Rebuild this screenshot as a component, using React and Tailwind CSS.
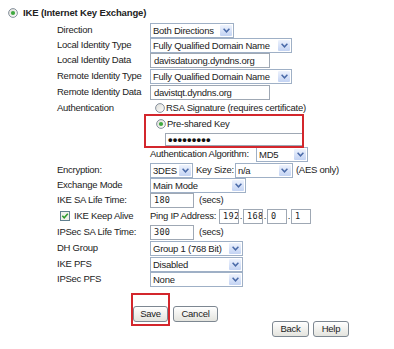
import React from "react";

function Chevron() {
  return (
    <svg width="7" height="5" viewBox="0 0 7 5">
      <path d="M0.6 0.8 L3.5 3.8 L6.4 0.8" stroke="#4a6aa8" strokeWidth="1.5" fill="none" />
    </svg>
  );
}

function Select({ className, children }) {
  return (
    <div className={`flex shrink-0 h-[15px] border border-[#9fb0c6] bg-white ${className}`}>
      <div className="flex-1 min-w-0 pl-[2px] leading-[13px] whitespace-nowrap overflow-hidden">{children}</div>
      <div className="w-[12px] m-[1px] flex items-center justify-center bg-gradient-to-b from-[#eef3fd] to-[#c3d3f3] rounded-[1px]">
        <Chevron />
      </div>
    </div>
  );
}

function Input({ className, children, mono }) {
  return (
    <div
      className={`shrink-0 h-[15px] border border-[#9fa8b4] bg-white pl-[3px] leading-[13px] whitespace-nowrap overflow-hidden ${
        mono ? "font-['DejaVu_Sans_Mono'] text-[8.5px] tracking-[0.3px]" : ""
      } ${className}`}
    >
      {children}
    </div>
  );
}

function Radio({ checked }) {
  return (
    <svg width="10" height="10" viewBox="0 0 10 10" className="shrink-0">
      <defs>
        <linearGradient id="rg" x1="0" y1="0" x2="1" y2="1">
          <stop offset="0" stopColor="#dcdcd6" />
          <stop offset="1" stopColor="#ffffff" />
        </linearGradient>
      </defs>
      <circle cx="5" cy="5" r="4.4" fill="url(#rg)" stroke="#7b8794" strokeWidth="0.9" />
      {checked && <circle cx="5" cy="5" r="2.1" fill="#3fa93f" />}
    </svg>
  );
}

function Checkbox() {
  return (
    <svg width="10" height="10" viewBox="0 0 10 10" className="shrink-0">
      <rect x="0.5" y="0.5" width="9" height="9" fill="#eef0ea" stroke="#5f7f8f" />
      <path d="M2.3 4.8 L4.2 6.8 L7.8 2.8" stroke="#2c9a2c" strokeWidth="1.5" fill="none" />
    </svg>
  );
}

function Row({ label, h, children }) {
  return (
    <div className={`flex items-center ${h || "h-[15px]"}`}>
      <div className="w-[93px] shrink-0 whitespace-nowrap">{label}</div>
      <div className="flex items-center whitespace-nowrap">{children}</div>
    </div>
  );
}

function Btn({ className, children }) {
  return (
    <div
      className={`h-[16px] flex items-center justify-center border border-[#7d8791] rounded-[3px] bg-gradient-to-b from-white to-[#e4e4de] ${className}`}
    >
      {children}
    </div>
  );
}

export default function App() {
  return (
    <div className="relative w-[394px] h-[349px] bg-white text-[#222] font-['Liberation_Sans',Arial,sans-serif] text-[9.5px] tracking-[-0.25px] overflow-hidden">
      <div className="flex items-center h-[14px] mt-[6px] pl-[8px] gap-[5px]">
        <Radio checked />
        <span className="font-bold text-[9.5px] tracking-[-0.15px]">IKE (Internet Key Exchange)</span>
      </div>

      <div className="pl-[57px] mt-[2px] flex flex-col">
        <Row label="Direction" h="h-[16px]">
          <Select className="w-[84px]">Both Directions</Select>
        </Row>
        <Row label="Local Identity Type">
          <Select className="w-[142px]">Fully Qualified Domain Name</Select>
        </Row>
        <Row label="Local Identity Data">
          <Input className="w-[120px]">davisdatuong.dyndns.org</Input>
        </Row>
        <Row label="Remote Identity Type" h="h-[16px]">
          <Select className="w-[142px]">Fully Qualified Domain Name</Select>
        </Row>
        <Row label="Remote Identity Data" h="h-[16px]">
          <Input className="w-[120px]">davistqt.dyndns.org</Input>
        </Row>
        <Row label="Authentication" h="h-[16px]">
          <div className="flex items-center ml-[5px] gap-[1px]">
            <Radio />
            <span>RSA Signature (requires certificate)</span>
          </div>
        </Row>
        <Row label="" h="h-[16px]">
          <div className="flex items-center ml-[6px] gap-[1px]">
            <Radio checked />
            <span>Pre-shared Key</span>
          </div>
        </Row>
        <Row label="" h="h-[14px]">
          <div className="ml-[15px] w-[138px] h-[13px] border border-[#9fa8b4] bg-white pl-[2px] flex items-center text-[13px] font-bold tracking-[0.2px] leading-none text-[#111]">
            •••••••••
          </div>
        </Row>
        <Row label="" h="h-[17px]">
          <span className="w-[104px] shrink-0">Authentication Algorithm:</span>
          <Select className="w-[52px] ml-[2px]">MD5</Select>
        </Row>
        <Row label="Encryption:">
          <Select className="w-[43px]">3DES</Select>
          <span className="ml-[3px]">Key Size:</span>
          <Select className="w-[58px] ml-[1px]">n/a</Select>
          <span className="ml-[3px]">(AES only)</span>
        </Row>
        <Row label="Exchange Mode">
          <Select className="w-[96px]">Main Mode</Select>
        </Row>
        <Row label="IKE SA Life Time:">
          <Input className="w-[44px]" mono>180</Input>
          <span className="ml-[5px]">(secs)</span>
        </Row>
        <Row
          label={
            <div className="flex items-center gap-[4px] pl-[3px]">
              <Checkbox />
              <span>IKE Keep Alive</span>
            </div>
          }
          h="h-[16px]"
        >
          <span>Ping IP Address:</span>
          <Input className="w-[20px] ml-[3px]" mono>192</Input>
          <span className="w-[4px] text-center">.</span>
          <Input className="w-[20px]" mono>168</Input>
          <span className="w-[4px] text-center">.</span>
          <Input className="w-[20px]" mono>0</Input>
          <span className="w-[4px] text-center">.</span>
          <Input className="w-[20px]" mono>1</Input>
        </Row>
        <Row label="IPSec SA Life Time:" h="h-[16px]">
          <Input className="w-[44px]" mono>300</Input>
          <span className="ml-[5px]">(secs)</span>
        </Row>
        <Row label="DH Group" h="h-[16px]">
          <Select className="w-[93px]">Group 1 (768 Bit)</Select>
        </Row>
        <Row label="IKE PFS" h="h-[16px]">
          <Select className="w-[93px]">Disabled</Select>
        </Row>
        <Row label="IPSec PFS">
          <Select className="w-[93px]">None</Select>
        </Row>
      </div>

      <div className="flex pl-[133px] mt-[19px] gap-[5px]">
        <Btn className="w-[35px]">Save</Btn>
        <Btn className="w-[45px]">Cancel</Btn>
      </div>
      <div className="flex pl-[272px] mt-[-1px] gap-[4px]">
        <Btn className="w-[37px]">Back</Btn>
        <Btn className="w-[36px]">Help</Btn>
      </div>

      <div className="absolute left-[144px] top-[114px] w-[160px] h-[34px] border-2 border-[#d3262c]" />
      <div className="absolute left-[131px] top-[293px] w-[39px] h-[33px] border-2 border-[#d3262c]" />
    </div>
  );
}
